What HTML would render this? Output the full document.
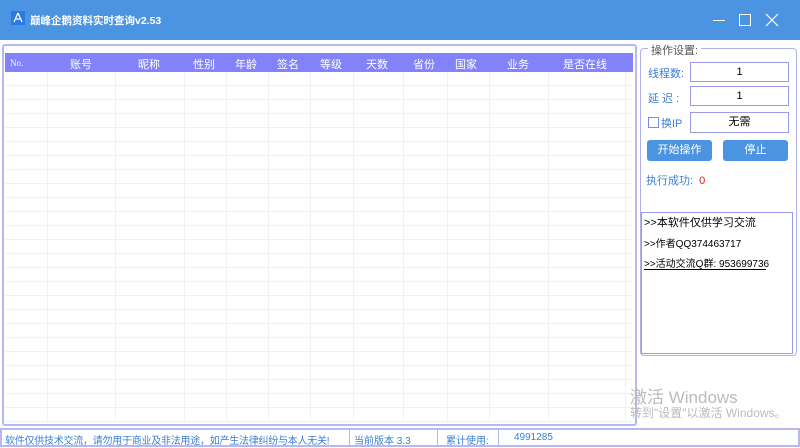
<!DOCTYPE html>
<html><head><meta charset="utf-8"><style>
*{margin:0;padding:0;box-sizing:border-box}
body{width:800px;height:448px;overflow:hidden;background:#fff;font-family:"Liberation Sans","Noto Sans CJK SC",sans-serif;position:relative}
.a{position:absolute}
#title{left:0;top:0;width:800px;height:40px;background:#4a94e2}
#title .t{left:30px;top:13px;color:#fff;font-size:10.5px;font-weight:bold}
#tbl{left:2px;top:44px;width:635px;height:382px;border:2px solid #b8b8f0;border-radius:3px}
#grid{left:5px;top:72px;width:628px;height:350px;
background-image:repeating-linear-gradient(to bottom,transparent 0,transparent 13px,#f0f0f6 13px,#f0f0f6 14px)}
.vl{position:absolute;top:72px;width:1px;height:350px;background:#f0f0f6}
#hdr{left:5px;top:53px;width:628px;height:19px;background:#8282fa;color:#fff;font-size:11px}
#hdr span{position:absolute;top:3px;transform:translateX(-50%)}
#grp{left:640px;top:48px;width:157px;height:308px;border:1px solid #b0b0e8;border-radius:4px}
.lbl{color:#3a7fd0;font-size:11px}
.box{position:absolute;background:#fff;border:1px solid #9a9ae8;font-size:11px;text-align:center;line-height:18px}
.btn{position:absolute;background:#4a94e2;color:#fff;font-size:11px;text-align:center;line-height:21px;border-radius:3px;height:21px}
#log{left:641px;top:212px;width:152px;height:142px;border:1px solid #9a9ae8;font-size:10px;color:#000}
#status{left:0;top:428px;width:800px;height:19px;border:2px solid #b8b8f0;background:#fff;color:#3a7fd0;font-size:10px}
#status .s{position:absolute;top:2px;white-space:nowrap}
#status .d{position:absolute;top:0;width:1px;height:15px;background:#b8b8f0}
</style></head><body>
<div id="title" class="a">
<svg class="a" style="left:11px;top:11px" width="14" height="14"><rect width="14" height="14" fill="#2a7ae0"/><path d="M7 2 L3 11 M7 2 L11 11 M5 8 L9 8" stroke="#fff" stroke-width="1.3" fill="none"/></svg>
<div class="a t">巅峰企鹅资料实时查询v2.53</div>
<div class="a" style="left:713px;top:20px;width:12px;height:1px;background:#fff"></div>
<div class="a" style="left:739px;top:14px;width:12px;height:12px;border:1px solid #fff"></div>
<svg class="a" style="left:765px;top:13px" width="14" height="14"><path d="M1 1L13 13M13 1L1 13" stroke="#fff" stroke-width="1.2"/></svg>
</div>
<div id="tbl" class="a"></div>
<div id="grid" class="a"></div>
<div class="vl" style="left:47px"></div><div class="vl" style="left:115px"></div><div class="vl" style="left:184px"></div><div class="vl" style="left:226px"></div><div class="vl" style="left:268px"></div><div class="vl" style="left:310px"></div><div class="vl" style="left:353px"></div><div class="vl" style="left:403px"></div><div class="vl" style="left:447px"></div><div class="vl" style="left:489px"></div><div class="vl" style="left:548px"></div><div class="vl" style="left:625px"></div>
<div id="hdr" class="a">
<span style="left:5px;transform:none;font-family:'Liberation Serif',serif;font-size:9px;top:5px">No.</span>
<span style="left:76px">账号</span><span style="left:144px">昵称</span><span style="left:199px">性别</span><span style="left:241px">年龄</span><span style="left:283px">签名</span><span style="left:326px">等级</span><span style="left:372px">天数</span><span style="left:419px">省份</span><span style="left:461px">国家</span><span style="left:513px">业务</span><span style="left:580px">是否在线</span>
</div>
<div id="grp" class="a"></div>
<div class="a lbl" style="left:648px;top:42px;background:#fff;padding:0 3px;color:#555">操作设置:</div>
<div class="a lbl" style="left:648px;top:65px">线程数:</div>
<div class="box" style="left:690px;top:62px;width:99px;height:20px">1</div>
<div class="a lbl" style="left:648px;top:90px">延 迟 :</div>
<div class="box" style="left:690px;top:86px;width:99px;height:20px">1</div>
<div class="a" style="left:648px;top:117px;width:11px;height:11px;border:1px solid #7a8ae0"></div>
<div class="a lbl" style="left:661px;top:115px">换IP</div>
<div class="box" style="left:690px;top:112px;width:99px;height:21px;line-height:19px">无需</div>
<div class="btn" style="left:647px;top:140px;width:65px">开始操作</div>
<div class="btn" style="left:723px;top:140px;width:65px">停止</div>
<div class="a lbl" style="left:646px;top:172px">执行成功: <span style="color:#e02020;margin-left:3px">0</span></div>
<div id="log" class="a">
<div class="a" style="left:2px;top:1px;font-size:11px">&gt;&gt;本软件仅供学习交流</div>
<div class="a" style="left:2px;top:22px">&gt;&gt;作者QQ374463717</div>
<div class="a" style="left:2px;top:42px">&gt;&gt;活动交流Q群: 953699736</div>
<div class="a" style="left:2px;top:56px;width:122px;height:1px;background:#000"></div>
</div>
<div class="a" style="left:630px;top:383px;color:#bbb;font-size:17px">激活 Windows</div>
<div class="a" style="left:630px;top:404px;color:#bbb;font-size:12px">转到"设置"以激活 Windows。</div>
<div id="status" class="a">
<span class="s" style="left:3px;letter-spacing:-0.25px">软件仅供技术交流，请勿用于商业及非法用途，如产生法律纠纷与本人无关!</span>
<div class="d" style="left:347px"></div>
<span class="s" style="left:352px">当前版本 3.3</span>
<div class="d" style="left:435px"></div>
<span class="s" style="left:444px">累计使用:</span>
<div class="d" style="left:496px"></div>
<span class="s" style="left:512px">4991285</span>
</div>
</body></html>
